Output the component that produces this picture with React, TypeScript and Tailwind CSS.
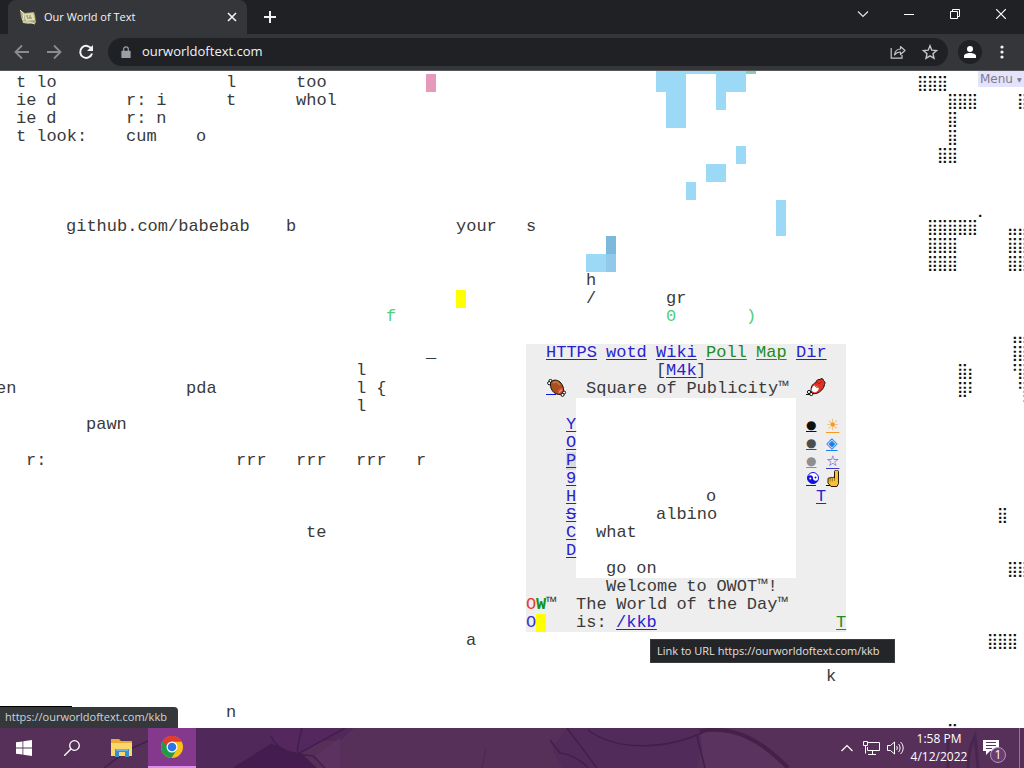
import React from "react";

const COL = 10;
const ROW = 18;

type Place = { c: number; r: number };

const at = ({ c, r }: Place): React.CSSProperties => ({ left: c * COL, top: r * ROW });

/* Words keep to the character grid; the spaces between them are plain text. */
function Words({ text }: { text: string }) {
  return (
    <>
      {text.split(" ").map((word, i) => (
        <React.Fragment key={i}>
          {i > 0 && " "}
          <span className="inline-block" style={{ width: word.length * COL }}>
            {word}
          </span>
        </React.Fragment>
      ))}
    </>
  );
}

function Run({ c, r, children, className = "text-[#3a3a3a]" }: Place & { children: string; className?: string }) {
  return (
    <span className={`absolute whitespace-pre ${className}`} style={at({ c, r })}>
      <Words text={children} />
    </span>
  );
}

function CellLink({
  c,
  r,
  children,
  href = "#",
  className = "text-[#2a22cc]",
  label,
}: Place & { children: React.ReactNode; href?: string; className?: string; label?: string }) {
  return (
    <a
      href={href}
      aria-label={label}
      className={`absolute h-[18px] whitespace-pre underline decoration-1 underline-offset-2 ${className}`}
      style={at({ c, r })}
    >
      {children}
    </a>
  );
}

function Fill({ c, r, w, h, className }: Place & { w: number; h: number; className: string }) {
  return <div className={`absolute ${className}`} style={{ ...at({ c, r }), width: w * COL, height: h * ROW }} />;
}

function Braille({ c, r, children }: Place & { children: string }) {
  return (
    <span
      className="absolute flex pl-px font-['DejaVu_Sans',sans-serif] text-[15px] text-[#111]"
      style={at({ c, r })}
    >
      {Array.from(children).map((ch, i) => (
        <span key={i} className="w-[10px]">
          {ch}
        </span>
      ))}
    </span>
  );
}

const words: [number, number, string][] = [
  [2, 0, "t lo"], [23, 0, "l"], [30, 0, "too"],
  [2, 1, "ie d"], [13, 1, "r: i"], [23, 1, "t"], [30, 1, "whol"],
  [2, 2, "ie d"], [13, 2, "r: n"],
  [2, 3, "t look:"], [13, 3, "cum"], [20, 3, "o"],
  [7, 8, "github.com/babebab"], [29, 8, "b"], [46, 8, "your"], [53, 8, "s"],
  [59, 11, "h"], [59, 12, "/"], [67, 12, "gr"],
  [43, 15, "_"], [36, 16, "l"],
  [0, 17, "en"], [19, 17, "pda"], [36, 17, "l {"],
  [36, 18, "l"], [9, 19, "pawn"],
  [3, 21, "r:"], [24, 21, "rrr"], [30, 21, "rrr"], [36, 21, "rrr"], [42, 21, "r"],
  [31, 25, "te"], [47, 31, "a"], [83, 33, "k"], [23, 35, "n"],
  [59, 17, "Square of Publicity™"],
  [71, 23, "o"], [66, 24, "albino"], [60, 25, "what"], [61, 27, "go on"],
  [61, 28, "Welcome to OWOT™!"], [58, 29, "The World of the Day™"], [58, 30, "is:"],
];

const dots: [number, number, string][] = [
  [92, 0, "⣿⣿⣿"], [95, 1, "⣿⣿⣿"], [102, 1, "⣿"], [95, 2, "⣿"], [95, 3, "⣿"], [94, 4, "⣿⣿"],
  [98, 7, "⡀"], [93, 8, "⣿⣿⣿⣿⣿"], [101, 8, "⣤⣤"], [93, 9, "⣿⣿⣿"], [101, 9, "⣿⣿"],
  [93, 10, "⣿⣿⣿"], [101, 10, "⣿⣿"],
  [101, 14, "⢠⣤"], [101, 15, "⢸⣿"], [96, 16, "⣿⡆"], [101, 16, "⠘⣿"], [96, 17, "⣿⠇"], [102, 17, "⢻"],
  [102, 18, "⠈"], [100, 24, "⣿"], [101, 27, "⣿⣿"], [99, 31, "⣿⣿⣿"], [95, 36, "⠉"],
];

const sky: [number, number, number, number][] = [
  [66, -1, 3, 2], [67, 1, 2, 2], [69, -1, 3, 1], [72, -1, 3, 2], [72, 1, 1, 1],
  [74, 4, 1, 1], [71, 5, 2, 1], [69, 6, 1, 1], [78, 7, 1, 2], [59, 10, 2, 1],
];

const sideLinks = ["Y", "O", "P", "9", "H", "S", "C", "D"];

const symbol = "font-['DejaVu_Sans',sans-serif] text-[15px]";
const bullet = "font-['DejaVu_Sans',sans-serif] text-[12px]";

function Meat() {
  return (
    <svg viewBox="0 0 20 18" className="h-[18px] w-5 overflow-visible">
      <path d="M0 14.500h10" stroke="#1010e6" />
      <circle cx="4.500" cy="1" r="1.600" fill="#fff" stroke="#111" />
      <circle cx="3.200" cy="3.200" r="1.600" fill="#fff" stroke="#111" />
      <circle cx="18" cy="12.500" r="1.600" fill="#fff" stroke="#111" />
      <circle cx="16.500" cy="14.800" r="1.600" fill="#fff" stroke="#111" />
      <path
        d="M5 2C7-.5 11-.5 14 2c2.500 2.500 4 6 3.500 8.500-.5 2.500-2.500 4.500-5 4C8.500 14 6 11 5 8 4.500 6 4 4 5 2z"
        fill="#a8501f"
        stroke="#111"
      />
      <path d="M7 3c2-2 5-1 7 2" fill="none" stroke="#d07a3d" strokeWidth="1.500" />
      <path d="M12 13.500c-1-3 1-6 5-5 .5 2-1.500 5-5 5z" fill="#e0533c" />
      <path d="M13.500 12.500c0-1 1-2 2.500-2.500" fill="none" stroke="#f3b7a4" />
    </svg>
  );
}

function Drumstick() {
  return (
    <svg viewBox="0 0 20 18" className="h-[18px] w-5 overflow-visible">
      <path d="M0 14.500h5" stroke="#111" />
      <circle cx="3" cy="12" r="1.600" fill="#fff" stroke="#111" />
      <circle cx="5.300" cy="14" r="1.600" fill="#fff" stroke="#111" />
      <path
        d="M5 11C5 7 6 4 10 2.500c0-2 2-3.500 4-3 1-1.500 3.500-1 3.500 1 1.500 1 2 2.500 1 4-.5 4-4 7.500-8 9-3 .5-5.500 0-5.500-2.500z"
        fill="#e23222"
        stroke="#111"
      />
      <path d="M5.500 11C5.500 8 7 5.500 9 5c1 1 2 2 4 2 0 3-2 5-4 5.500z" fill="#fff" />
      <path d="M9 5c0 2 2 3 4 2M11 2l2 2 3-3" fill="none" stroke="#b81d12" />
    </svg>
  );
}

function Finger() {
  return (
    <svg viewBox="0 0 14 18" className="h-[18px] w-[14px]">
      <path d="M0 15.500h5" stroke="#111" />
      <path
        d="M8.500 7V1.500c0-2 4-2 4 0V13.500l-1.500 3H5L2 13V9c0-1.500 2-1.500 2-.5 0-1.500 2.200-1.500 2.200-.3 0-1.200 2.300-1.200 2.300-.2z"
        fill="#f8c035"
        stroke="#241a05"
      />
      <path d="M4.200 9v2.500M6.300 9v2.500M8.500 8v3" fill="none" stroke="#6b4a0c" strokeWidth=".6" />
    </svg>
  );
}

function Yin() {
  return (
    <svg viewBox="0 0 14 18" className="h-[18px] w-[14px]">
      <path d="M0 15.500h10" stroke="#1010e6" />
      <circle cx="7" cy="8" r="5.500" fill="#fff" stroke="#1010e6" />
      <path d="M1.500 8a2.750 2.750 0 0 1 5.500 0 2.750 2.750 0 0 0 5.500 0 5.500 5.500 0 0 1-11 0z" fill="#1010e6" />
      <circle cx="9.500" cy="7.500" r="1" fill="#1010e6" />
      <circle cx="4.300" cy="8.500" r="1" fill="#fff" />
    </svg>
  );
}

function World() {
  return (
    <main className="relative min-h-0 flex-1 overflow-hidden bg-white">
      <div className="absolute top-[3px] -left-1 font-['Liberation_Mono',monospace] text-[17px] leading-[18px]">
        <Fill c={53} r={15} w={32} h={16} className="bg-[#eeeeee]" />
        <Fill c={58} r={18} w={22} h={10} className="bg-white" />
        <Fill c={57} r={21} w={1} h={1} className="bg-[#d9d9e2]" />
        {sky.map(([c, r, w, h], i) => (
          <Fill key={i} c={c} r={r} w={w} h={h} className="bg-[#9bd9f6]" />
        ))}
        <Fill c={75} r={-1} w={1} h={1} className="bg-[#86cdb9]" />
        <Fill c={61} r={9} w={1} h={1} className="bg-[#7cb9dc]" />
        <Fill c={61} r={10} w={1} h={1} className="bg-[#92c9ea]" />
        <Fill c={43} r={0} w={1} h={1} className="bg-[#e599bb]" />
        <Fill c={46} r={12} w={1} h={1} className="bg-[#ffff00]" />
        <Fill c={54} r={30} w={1} h={1} className="bg-[#ffff00]" />

        {words.map(([c, r, t], i) => (
          <Run key={i} c={c} r={r}>
            {t}
          </Run>
        ))}
        {dots.map(([c, r, t], i) => (
          <Braille key={i} c={c} r={r}>
            {t}
          </Braille>
        ))}
        <Run c={39} r={13} className="text-[#4fd07a]">f</Run>
        <Run c={67} r={13} className="text-[#4fd07a]">0</Run>
        <Run c={75} r={13} className="text-[#4fd07a]">)</Run>

        <CellLink c={55} r={15}>HTTPS</CellLink>
        <CellLink c={61} r={15}>wotd</CellLink>
        <CellLink c={66} r={15}>Wiki</CellLink>
        <CellLink c={71} r={15} className="text-[#218a21]">Poll</CellLink>
        <CellLink c={76} r={15} className="text-[#218a21]">Map</CellLink>
        <CellLink c={80} r={15}>Dir</CellLink>
        <Run c={66} r={16}>[</Run>
        <CellLink c={67} r={16}>M4k</CellLink>
        <Run c={70} r={16}>]</Run>
        <CellLink c={55} r={17} label="Meat on bone"><Meat /></CellLink>
        <CellLink c={81} r={17} label="Poultry leg"><Drumstick /></CellLink>

        {sideLinks.map((t, i) => (
          <CellLink key={t} c={57} r={19 + i}>
            {t === "S" ? <s>S</s> : t}
          </CellLink>
        ))}

        <CellLink c={81} r={19} className={`${bullet} text-[#111]`}>●</CellLink>
        <CellLink c={81} r={20} className={`${bullet} text-[#4d4d4d]`}>●</CellLink>
        <CellLink c={81} r={21} className={`${bullet} text-[#8e8e8e]`}>●</CellLink>
        <CellLink c={81} r={22} label="Yin yang"><Yin /></CellLink>
        <CellLink c={83} r={19} className={`${symbol} text-[#f79a1d]`}>☀</CellLink>
        <CellLink c={83} r={20} className={`${symbol} text-[#1f7fe8]`}>◈</CellLink>
        <CellLink c={83} r={21} className={`${symbol} text-[#3a35cf]`}>☆</CellLink>
        <CellLink c={83} r={22} label="Pointing up"><Finger /></CellLink>
        <CellLink c={82} r={23}>T</CellLink>
        <CellLink c={84} r={30} className="text-[#218a21]">T</CellLink>

        <Run c={53} r={29} className="text-[#e23a3a]">O</Run>
        <Run c={54} r={29} className="font-bold text-[#129412]">W</Run>
        <Run c={55} r={29}>™</Run>
        <Run c={53} r={30} className="text-[#3a32d0]">O</Run>
        <CellLink c={62} r={30} href="https://ourworldoftext.com/kkb">/kkb</CellLink>
      </div>

      <button className="absolute top-0 right-0 flex h-4 w-[46px] items-center gap-1 bg-[#e5e3fb] pl-[2px] font-['DejaVu_Sans',sans-serif] text-[12px] text-[#7d7a90]">
        Menu <span className="text-[6px]">▼</span>
      </button>

      <div
        role="tooltip"
        className="absolute top-[568px] left-[650px] flex h-6 w-[245px] items-center border border-[#3a3b3e] bg-[#242528] pl-[6px] text-[11px] whitespace-nowrap text-[#e0e0e0]"
      >
        Link to URL https://ourworldoftext.com/kkb
      </div>
      <div className="absolute bottom-[21px] left-0 h-px w-[72px] bg-black" />
      <div className="absolute bottom-0 left-0 flex h-[21px] w-[178px] items-center rounded-tr bg-[#35383b] pl-[5px] text-[11px] whitespace-nowrap text-[#cfd3d7]">
        https://ourworldoftext.com/kkb
      </div>
    </main>
  );
}

const iconButton = "flex shrink-0 items-center justify-center";

function TabStrip() {
  return (
    <header className="flex h-[34px] shrink-0 items-stretch bg-[#202124]">
      <div className="ml-2 flex w-[239px] items-center rounded-t-lg bg-[#35363a] pr-[7px] pl-3 text-[11px] text-[#f4f5f6]">
        <svg viewBox="0 0 16 16" className="mr-2 h-4 w-4">
          <path d="M0 1l5 3 9-1 1 3 1 8-8 1-5-1-2-6z" fill="#aaa981" />
          <path d="M4 5l9-1 2 7-9 1z" fill="#dfdfb2" />
          <path d="M0 1l3 3 1 7-2-1M3 13l6 0 6 2" fill="none" stroke="#eceacb" />
          <path d="M6 7h2m1 0h2M7 9h5" stroke="#77765a" />
        </svg>
        <span className="flex-1 whitespace-nowrap">Our World of Text</span>
        <button aria-label="Close tab" className={`${iconButton} h-4 w-4`}>
          <svg viewBox="0 0 16 16" className="h-4 w-4" stroke="#f1f3f4" strokeWidth="1.600">
            <path d="M4 4l8 8M12 4l-8 8" />
          </svg>
        </button>
      </div>
      <button aria-label="New tab" className={`${iconButton} w-[45px]`}>
        <svg viewBox="0 0 16 16" className="h-4 w-4" stroke="#f1f3f4" strokeWidth="2">
          <path d="M8 2v12M2 8h12" />
        </svg>
      </button>
      <div className="flex-1" />
      <div className="flex h-7">
        <button aria-label="Search tabs" className={`${iconButton} w-[46px]`}>
          <svg viewBox="0 0 12 12" className="h-3 w-3" fill="none" stroke="#e3e4e6" strokeWidth="1.200">
            <path d="M1 3.500l5 5 5-5" />
          </svg>
        </button>
        <button aria-label="Minimize" className={`${iconButton} w-[46px]`}>
          <svg viewBox="0 0 10 10" className="h-[10px] w-[10px]" stroke="#fff">
            <path d="M0 5.500h10" />
          </svg>
        </button>
        <button aria-label="Restore" className={`${iconButton} w-[46px]`}>
          <svg viewBox="0 0 10 10" className="h-[10px] w-[10px]" fill="none" stroke="#fff">
            <path d="M.5 2.500h7v7h-7zM2.500 2.500v-2h7v7h-2" />
          </svg>
        </button>
        <button aria-label="Close" className={`${iconButton} w-[46px]`}>
          <svg viewBox="0 0 10 10" className="h-[10px] w-[10px]" stroke="#fff" strokeWidth="1.200">
            <path d="M0 0l10 10M10 0L0 10" />
          </svg>
        </button>
      </div>
    </header>
  );
}

function Toolbar() {
  return (
    <nav className="flex h-[37px] shrink-0 items-center border-b border-[#55565a] bg-[#35363a] pr-[6px] pl-[6px]">
      <button aria-label="Back" className={`${iconButton} h-8 w-8`}>
        <svg viewBox="0 0 16 16" className="h-4 w-4" fill="none" stroke="#8b8c90" strokeWidth="1.800">
          <path d="M15 8H2M8 1.500L1.500 8 8 14.500" />
        </svg>
      </button>
      <button aria-label="Forward" className={`${iconButton} h-8 w-8`}>
        <svg viewBox="0 0 16 16" className="h-4 w-4" fill="none" stroke="#8b8c90" strokeWidth="1.800">
          <path d="M1 8h13M8 1.500L14.500 8 8 14.500" />
        </svg>
      </button>
      <button aria-label="Reload" className={`${iconButton} h-8 w-8`}>
        <svg viewBox="0 0 16 16" className="h-4 w-4" fill="none" stroke="#f1f3f4" strokeWidth="2">
          <path d="M13.500 5A6 6 0 1 0 14 9.500" />
          <path d="M15 1v6H9z" fill="#f1f3f4" stroke="none" />
        </svg>
      </button>
      <form className="ml-[6px] flex h-7 min-w-0 flex-1 items-center rounded-full bg-[#202124] pr-[10px] pl-3">
        <svg viewBox="0 0 12 14" className="mr-[10px] h-[13px] w-3" fill="#9aa0a6">
          <path d="M2 5h8a1 1 0 0 1 1 1v6a1 1 0 0 1-1 1H2a1 1 0 0 1-1-1V6a1 1 0 0 1 1-1z" />
          <path d="M3.500 6V3.500a2.500 2.500 0 0 1 5 0V6" fill="none" stroke="#9aa0a6" strokeWidth="1.300" />
        </svg>
        <input
          aria-label="Address"
          defaultValue="ourworldoftext.com"
          className="min-w-0 flex-1 bg-transparent text-[13px] text-[#f1f3f4] outline-none"
        />
        <button type="button" aria-label="Share" className={`${iconButton} mr-4 h-4 w-4`}>
          <svg viewBox="0 0 16 16" className="h-4 w-4" fill="none" stroke="#c4c7ca" strokeWidth="1.200">
            <path d="M1.200 4v10.200H12V11" />
            <path d="M4.500 11c.5-4 2.500-6 6-6V2.500L15 6.500l-4.500 4V8C8 8 6 9 4.500 11z" strokeLinejoin="round" />
          </svg>
        </button>
        <button type="button" aria-label="Bookmark" className={`${iconButton} h-4 w-4`}>
          <svg viewBox="0 0 16 16" className="h-4 w-4" fill="none" stroke="#c4c7ca" strokeWidth="1.400">
            <path d="M8 1.800l1.800 4.400 4.700.4L11 9.700l1 4.600-4-2.500-4 2.500 1-4.600L1.500 6.600l4.700-.4z" />
          </svg>
        </button>
      </form>
      <button aria-label="Profile" className={`${iconButton} ml-[10px] h-6 w-6 rounded-full bg-[#202124]`}>
        <svg viewBox="0 0 14 14" className="h-[14px] w-[14px]" fill="#fff">
          <circle cx="7" cy="4" r="3" />
          <path d="M1 13v-2c0-4 12-4 12 0v2z" />
        </svg>
      </button>
      <button aria-label="More" className={`${iconButton} ml-1 h-8 w-8`}>
        <svg viewBox="0 0 4 14" className="h-[14px] w-1" fill="#f1f3f4">
          <circle cx="2" cy="2" r="1.600" />
          <circle cx="2" cy="7" r="1.600" />
          <circle cx="2" cy="12" r="1.600" />
        </svg>
      </button>
    </nav>
  );
}

function Wallpaper() {
  return (
    <svg viewBox="0 0 1024 40" preserveAspectRatio="none" className="absolute inset-0 h-full w-full">
      <path d="M192 0h162l-14 13H300l-60 27h-48z" fill="#50285a" />
      <path d="M234 40l38-24 30 10 15 14z" fill="#451c50" />
      <path d="M270 0c2 18 12 22 28 26L345 0z" fill="#54285e" />
      <path d="M315 28l25-18v30h-16z" fill="#5b3260" />
      <path d="M552 20l15-20h140l-10 40H562z" fill="#512c5b" />
      <path d="M700 0c30 0 70 10 88 40h-84z" fill="#5b335f" />
      <g fill="none" stroke="#40204a" strokeWidth="1.500">
        <path d="M104 40l24-18 20-9M234 40l38-24M271 8c6 16 24 18 42 20l12 12M302 0c-3 14-6 20-4 26l47-26" />
        <path d="M550 12l10 13c14 2 22 8 28 15M567 0l30 40M588 2c30 22 80 20 120 0M697 8l8 32" />
        <path d="M486 20l-4 20" opacity=".4" />
        <path d="M700 3c35-6 62 10 88 37" strokeWidth="4" stroke="#452047" />
        <path d="M948 8v32M968 40c0-14 3-24 7-32l3 32" strokeWidth="3" opacity=".6" />
      </g>
    </svg>
  );
}

function Taskbar() {
  return (
    <footer className="relative h-10 shrink-0 bg-[#573059]">
      <Wallpaper />
      <div className="relative flex h-full items-center text-white">
        <button aria-label="Start" className={`${iconButton} h-full w-12`}>
          <svg viewBox="0 0 16 16" className="h-4 w-4" fill="#fff">
            <path d="M0 2.300l6.500-.9v6.200H0zM7.300 1.300L16 0v7.600H7.300zM0 8.400h6.500v6.200L0 13.700zM7.300 8.400H16V16l-8.700-1.200z" />
          </svg>
        </button>
        <button aria-label="Search" className={`${iconButton} h-full w-12`}>
          <svg viewBox="0 0 16 16" className="h-4 w-4" fill="none" stroke="#fff" strokeWidth="1.300">
            <circle cx="10.500" cy="5.500" r="4.800" />
            <path d="M7 9l-7 7" />
          </svg>
        </button>
        <button aria-label="File Explorer" className={`${iconButton} h-full w-[52px]`}>
          <svg viewBox="0 0 22 18" className="h-[18px] w-[22px]">
            <path d="M0 0h8l2 2h11v15H0z" fill="#e8ac36" />
            <path d="M0 4h21v13H0z" fill="#fbd66b" />
            <path d="M4 18v-8h14v8h-4v-5H8v5z" fill="#3d8fc9" />
            <path d="M5 10h12v2H5z" fill="#67b5e6" />
          </svg>
        </button>
        <button
          aria-label="Google Chrome"
          className={`${iconButton} h-full w-12 border-b-2 border-[#df8cf0] bg-[#85398c]`}
        >
          <svg viewBox="0 0 24 24" className="h-6 w-6">
            <circle cx="12" cy="12" r="11" fill="#fbc116" />
            <path d="M12 12L2.500 6.500A11 11 0 0 1 21.500 6.500H12z" fill="#e33b2e" />
            <path d="M2.500 6.500A11 11 0 0 0 11.500 23L16.700 14.700 12 12z" fill="#229a4b" />
            <path d="M2.500 6.500l4.700 8.200L12 12V6.500z" fill="#229a4b" />
            <path d="M2.500 6.500A11 11 0 0 1 21.500 6.500H12A5.500 5.500 0 0 0 7 10.500z" fill="#e33b2e" />
            <circle cx="12" cy="12" r="5.500" fill="#fff" />
            <circle cx="12" cy="12" r="4.300" fill="#2c75e8" />
          </svg>
        </button>
        <div className="flex-1" />
        <button aria-label="Show hidden icons" className={`${iconButton} h-full w-6`}>
          <svg viewBox="0 0 12 8" className="h-2 w-3" fill="none" stroke="#fff" strokeWidth="1.200">
            <path d="M.5 7L6 1.500 11.500 7" />
          </svg>
        </button>
        <button aria-label="Network" className={`${iconButton} h-full w-6`}>
          <svg viewBox="0 0 17 14" className="h-[14px] w-[17px]" fill="none" stroke="#fff">
            <path d="M5 1.500h11.500v8H4.500V6M9.500 9.500v4M5 13.500h8M.5.500h4v4h-4zM2.500 4.500v8" />
          </svg>
        </button>
        <button aria-label="Volume" className={`${iconButton} h-full w-6`}>
          <svg viewBox="0 0 17 14" className="h-[14px] w-[17px]" fill="none" stroke="#fff">
            <path d="M.5 4.500h3l4-3.500v12l-4-3.500h-3zM9.500 5c1 1 1 3 0 4M11.500 3c2 2 2 6 0 8M13.500 1c3.500 3 3.500 9 0 12" />
          </svg>
        </button>
        <time className="w-16 text-center text-[12px] leading-[18px] whitespace-nowrap">
          1:58 PM
          <br />
          4/12/2022
        </time>
        <button aria-label="Notifications" className={`${iconButton} relative h-full w-12`}>
          <svg viewBox="0 0 26 30" className="h-[30px] w-[26px]">
            <path d="M1 7h16v11H8l-4 4v-4H1z" fill="#fff" />
            <path d="M4 9.500h10M4 12.500h10M4 15.500h6" stroke="#5b3560" />
            <circle cx="16" cy="22" r="7.500" fill="#693c72" stroke="#b694bd" />
          </svg>
          <span className="absolute top-[19px] left-[21px] w-3 text-center text-[12px] leading-4">1</span>
        </button>
        <div className="mr-1 h-full w-px bg-[#927594]" />
      </div>
    </footer>
  );
}

export default function App() {
  return (
    <div className="flex h-screen flex-col overflow-hidden bg-white font-['Open_Sans','Noto_Sans',sans-serif]">
      <TabStrip />
      <Toolbar />
      <World />
      <Taskbar />
    </div>
  );
}
